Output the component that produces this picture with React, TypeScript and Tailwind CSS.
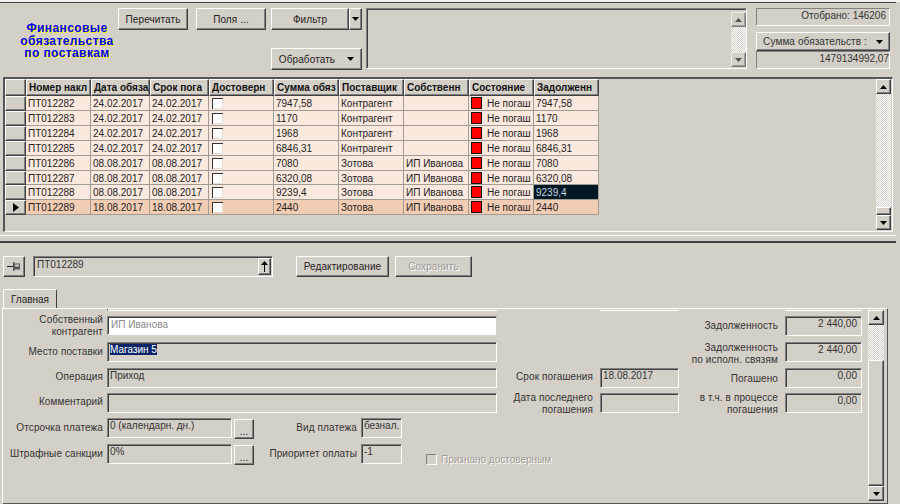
const raised = "border border-t-white border-l-white border-r-[#404040] border-b-[#404040] shadow-[inset_-1px_-1px_0_#808080]";
const sunken = "border border-t-[#808080] border-l-[#808080] border-r-white border-b-white shadow-[inset_1px_1px_0_#404040]";
const dither = "bg-[image:repeating-conic-gradient(#ffffff_0_25%,#d4d0c8_0_50%)] bg-size-[2px_2px]";

const rows = [
  { no: "ПТ012282", d1: "24.02.2017", d2: "24.02.2017", sum: "7947,58", sup: "Контрагент", own: "", debt: "7947,58" },
  { no: "ПТ012283", d1: "24.02.2017", d2: "24.02.2017", sum: "1170", sup: "Контрагент", own: "", debt: "1170" },
  { no: "ПТ012284", d1: "24.02.2017", d2: "24.02.2017", sum: "1968", sup: "Контрагент", own: "", debt: "1968" },
  { no: "ПТ012285", d1: "24.02.2017", d2: "24.02.2017", sum: "6846,31", sup: "Контрагент", own: "", debt: "6846,31" },
  { no: "ПТ012286", d1: "08.08.2017", d2: "08.08.2017", sum: "7080", sup: "Зотова", own: "ИП Иванова", debt: "7080" },
  { no: "ПТ012287", d1: "08.08.2017", d2: "08.08.2017", sum: "6320,08", sup: "Зотова", own: "ИП Иванова", debt: "6320,08" },
  { no: "ПТ012288", d1: "08.08.2017", d2: "08.08.2017", sum: "9239,4", sup: "Зотова", own: "ИП Иванова", debt: "9239,4" },
  { no: "ПТ012289", d1: "18.08.2017", d2: "18.08.2017", sum: "2440", sup: "Зотова", own: "ИП Иванова", debt: "2440" },
];

function Arrow({ dir }: { dir: "up" | "down" }) {
  return (
    <svg width="7" height="4" viewBox="0 0 7 4">
      <path d={dir === "up" ? "M3.5 0 7 4H0z" : "M0 0h7L3.5 4z"} fill="#000" />
    </svg>
  );
}

function ScrollBtn({ dir, disabled }: { dir: "up" | "down"; disabled?: boolean }) {
  return (
    <div className={`h-[15px] w-full shrink-0 flex items-center justify-center bg-[#d4d0c8] ${raised} ${disabled ? "opacity-60" : ""}`}>
      <Arrow dir={dir} />
    </div>
  );
}

function Btn({ className, children, disabled }: { className: string; children: React.ReactNode; disabled?: boolean }) {
  return (
    <div className={`flex items-center justify-center tracking-[0.1px] ${raised} ${disabled ? "text-[#9a9a94] [text-shadow:1px_1px_0_#ffffff]" : "text-[#222]"} ${className}`}>
      {children}
    </div>
  );
}

function HeadCell({ className, children }: { className: string; children?: React.ReactNode }) {
  return (
    <div className={`h-[17px] shrink-0 overflow-hidden whitespace-nowrap pl-[2px] font-bold leading-[15px] text-[#111] ${raised} ${className}`}>
      {children}
    </div>
  );
}

function Cell({ className, children }: { className: string; children?: React.ReactNode }) {
  return (
    <div className={`shrink-0 overflow-hidden whitespace-nowrap border-r border-b border-[#a09c94] pl-[2px] pt-[1px] leading-[13px] text-[#222] ${className}`}>
      {children}
    </div>
  );
}

function Field({ className, children }: { className: string; children?: React.ReactNode }) {
  return <div className={`h-[20px] overflow-hidden whitespace-nowrap pl-[2px] leading-[14px] text-[#333] ${sunken} ${className}`}>{children}</div>;
}

function Label({ className, h = "h-[18px]", children }: { className: string; h?: string; children: React.ReactNode }) {
  return <div className={`flex flex-col justify-center items-end text-right whitespace-nowrap leading-[12px] tracking-[0.1px] text-[#333] ${h} ${className}`}>{children}</div>;
}

export default function App() {
  return (
    <div className="w-[900px] h-[504px] overflow-hidden bg-[#d4d0c8] font-['Liberation_Sans',Arial,sans-serif] text-[10px]">
      <div className="h-[2px] bg-[#f4f2ee]" />
      <div className="h-[1px] w-[896px] bg-[#404040]" />

      {/* Top toolbar */}
      <div className="flex h-[74px] pt-[5px]">
        <div className="w-[118px] shrink-0 pt-[14px] pl-[16px] pr-[0px] text-center text-[12px] font-bold leading-[12.5px] tracking-[0.4px] text-[#0000ff] [text-shadow:1px_1px_0_#f5f500]">
          Финансовые<br />обязательства<br />по поставкам
        </div>
        <div className="w-[244px] shrink-0 flex flex-col justify-between pb-[7px]">
          <div className="flex">
            <Btn className="w-[70px] h-[22px]">Перечитать</Btn>
            <Btn className="w-[70px] h-[22px] ml-[8px]">Поля ...</Btn>
            <Btn className="w-[78px] h-[22px] ml-[5px]">Фильтр</Btn>
            <Btn className="w-[13px] h-[22px]"><Arrow dir="down" /></Btn>
          </div>
          <Btn className="w-[91px] h-[22px] ml-[153px] gap-[12px]">Обработать <Arrow dir="down" /></Btn>
        </div>
        <div className={`w-[381px] h-[61px] ml-[4px] shrink-0 flex justify-end ${sunken}`}>
          <div className="w-[15px] h-[55px] mt-[3px] flex flex-col">
            <ScrollBtn dir="up" disabled />
            <div className={`flex-1 ${dither}`} />
            <ScrollBtn dir="down" disabled />
          </div>
        </div>
        <div className="w-[134px] ml-[9px] shrink-0 flex flex-col">
          <div className="h-[18px] pr-[3px] text-right leading-[13px] text-[#333] border border-t-[#808080] border-l-[#808080] border-r-white border-b-white">Отобрано: 146206</div>
          <Btn className="h-[19px] mt-[6px] gap-[9px] text-[#333]">Сумма обязательств : <Arrow dir="down" /></Btn>
          <div className="h-[18px] text-right leading-[13px] text-[#333] border border-t-[#808080] border-l-[#808080] border-r-white border-b-white">1479134992,07</div>
        </div>
      </div>

      {/* Grid */}
      <div className="w-[890px] h-[155px] ml-[3px] flex border-l-2 border-t-2 border-[#555] border-b border-b-white border-r border-r-white">
        <div className="flex-1">
          <div className="flex h-[17px]">
            <HeadCell className="w-[21px]" />
            <HeadCell className="w-[65px]">Номер накл</HeadCell>
            <HeadCell className="w-[59px]">Дата обяза</HeadCell>
            <HeadCell className="w-[59px]">Срок пога</HeadCell>
            <HeadCell className="w-[65px]">Достоверн</HeadCell>
            <HeadCell className="w-[65px]">Сумма обяз</HeadCell>
            <HeadCell className="w-[65px]">Поставщик</HeadCell>
            <HeadCell className="w-[65px]">Собственн</HeadCell>
            <HeadCell className="w-[65px]">Состояние</HeadCell>
            <HeadCell className="w-[65px]">Задолженн</HeadCell>
          </div>
          {rows.map((r, i) => {
            const rowBg = i === 7 ? "bg-[#f3ccb4]" : "bg-[#fbe9df]";
            return (
              <div key={r.no} className={`flex ${i === 5 ? "h-[14px]" : "h-[15px]"}`}>
                <div className={`w-[21px] shrink-0 flex items-center justify-center ${raised}`}>
                  {i === 7 && (
                    <svg width="6" height="9" viewBox="0 0 6 9"><path d="M0 0l6 4.5L0 9z" fill="#000" /></svg>
                  )}
                </div>
                <Cell className={`w-[65px] ${rowBg}`}>{r.no}</Cell>
                <Cell className={`w-[59px] ${rowBg}`}>{r.d1}</Cell>
                <Cell className={`w-[59px] ${rowBg}`}>{r.d2}</Cell>
                <Cell className={`w-[65px] ${rowBg}`}>
                  <div className="mt-[1px] ml-[1px] w-[11px] h-[11px] bg-white border-t border-l border-[#333] shadow-[inset_-1px_-1px_0_#e4e0d8]" />
                </Cell>
                <Cell className={`w-[65px] ${rowBg}`}>{r.sum}</Cell>
                <Cell className={`w-[65px] ${rowBg}`}>{r.sup}</Cell>
                <Cell className={`w-[65px] ${rowBg}`}>{r.own}</Cell>
                <Cell className={`w-[65px] flex gap-[5px] ${rowBg}`}>
                  <span className="w-[11px] h-[12px] bg-[#ff0000] border border-[#111] shrink-0" />
                  Не погаш
                </Cell>
                <Cell className={`w-[65px] ${i === 6 ? "bg-[#001726] !text-[#c8d4dc]" : rowBg}`}>{r.debt}</Cell>
              </div>
            );
          })}
        </div>
        <div className="w-[15px] h-[151px] mr-[1px] flex flex-col">
          <ScrollBtn dir="up" />
          <div className={`h-[115px] ${dither}`} />
          <div className={`h-[8px] ${raised}`} />
          <ScrollBtn dir="down" />
        </div>
      </div>

      {/* Splitter */}
      <div className="h-[8px] w-[896px] border-b-2 border-b-[#404040]">
        <div className="mt-[3px] h-[1px] bg-white" />
      </div>

      {/* Record bar */}
      <div className="flex h-[21px] mt-[13px] ml-[3px]">
        <Btn className="w-[22px] h-[21px]">
          <svg width="14" height="9" viewBox="0 0 14 9">
            <path d="M0 4.5h6" stroke="#222" fill="none" />
            <path d="M6 0v9h1.5V7.5H13v-6H7.5V0z" fill="#555" />
            <path d="M8 2.5h4v2H8z" fill="#d4d0c8" />
          </svg>
        </Btn>
        <div className={`w-[240px] h-[21px] ml-[8px] flex justify-between pl-[3px] text-[#333] leading-[15px] ${sunken}`}>
          ПТ012289
          <div className={`w-[13px] h-[17px] mt-[1px] mr-[1px] flex items-center justify-center ${raised}`}>
            <svg width="7" height="11" viewBox="0 0 7 11"><path d="M3.5 0 7 4H4V11H3V4H0z" fill="#000" /></svg>
          </div>
        </div>
        <Btn className="w-[93px] h-[21px] ml-[23px]">Редактирование</Btn>
        <Btn className="w-[77px] h-[21px] ml-[6px]" disabled>Сохранить</Btn>
      </div>

      {/* Tab */}
      <div className="flex h-[19px] mt-[12px] ml-[3px]">
        <div className="w-[54px] pt-[2px] text-center text-[#222] border-t border-l border-white border-r border-r-[#404040] rounded-t-[2px]">Главная</div>
      </div>

      <div className="w-[886px] h-[197px] ml-[2px] flex border-t border-l border-white border-r border-r-[#555] border-b-2 border-b-[#555]">
        <div className="flex-1 min-w-0">
          <div className="flex h-[2px] ml-[104px]">
            <div className="w-[390px] border-l border-l-[#555] border-b border-b-white" />
            <div className="w-[79px] ml-[103px] border-b border-b-white" />
            <div className="w-[77px] ml-[106px] border-b border-b-white" />
          </div>
          <div className="mt-[5px] ml-[2px] grid grid-cols-[102px_125px_24px_105px_41px_95px_103px_79px_106px_77px] grid-rows-[26px_26px_25px_25px_26px_26px]">
            <Label h="h-[20px]" className="col-start-1 row-start-1 pr-[4px]"><span>Собственный</span><span>контрагент</span></Label>
            <div className="col-start-2 col-span-5 row-start-1 h-[19px] pl-[3px] leading-[15px] text-[#8a8a8a] bg-white overflow-hidden border border-t-[#808080] border-l-[#808080] border-r-[#d4d0c8] border-b-white shadow-[inset_1px_1px_0_#404040]">ИП Иванова</div>
            <Label className="col-start-1 row-start-2 pr-[4px] mt-[1px]">Место поставки</Label>
            <Field className="col-start-2 col-span-5 row-start-2"><span className="bg-[#0a246a] text-white">Магазин 5</span></Field>
            <Label className="col-start-1 row-start-3 pr-[4px]">Операция</Label>
            <Field className="col-start-2 col-span-5 row-start-3">Приход</Field>
            <Label className="col-start-1 row-start-4 pr-[4px]">Комментарий</Label>
            <Field className="col-start-2 col-span-5 row-start-4" />
            <Label className="col-start-1 row-start-5 pr-[4px] mt-[1px]">Отсрочка платежа</Label>
            <Field className="col-start-2 row-start-5">0 (календарн. дн.)</Field>
            <Btn className="col-start-3 row-start-5 w-[20px] h-[20px] ml-[2px] mt-[1px] pt-[4px]">...</Btn>
            <Label className="col-start-1 row-start-6 pr-[4px] mt-[1px]">Штрафные санкции</Label>
            <Field className="col-start-2 row-start-6">0%</Field>
            <Btn className="col-start-3 row-start-6 w-[20px] h-[20px] ml-[2px] mt-[1px] pt-[4px]">...</Btn>
            <Label className="col-start-4 row-start-5 pr-[4px] mt-[1px]">Вид платежа</Label>
            <Field className="col-start-5 row-start-5">безнал.</Field>
            <Label className="col-start-4 row-start-6 pr-[4px] mt-[1px]">Приоритет оплаты</Label>
            <Field className="col-start-5 row-start-6">-1</Field>
            <div className="col-start-6 col-span-3 row-start-6 ml-[24px] mt-[10px] flex items-center gap-[4px] h-[11px] text-[#a09c94] [text-shadow:1px_1px_0_#ffffff]">
              <span className="w-[11px] h-[11px] border border-t-[#808080] border-l-[#808080] border-r-white border-b-white" />
              Признано достоверным
            </div>
            <Label className="col-start-7 row-start-3 pr-[7px]">Срок погашения</Label>
            <Field className="col-start-8 row-start-3">18.08.2017</Field>
            <Label h="h-[22px]" className="col-start-7 row-start-4 pr-[7px]"><span>Дата последнего</span><span>погашения</span></Label>
            <Field className="col-start-8 row-start-4" />
            <Label className="col-start-9 row-start-1 pr-[7px] mt-[1px]">Задолженность</Label>
            <Field className="col-start-10 row-start-1 text-right pr-[4px]">2 440,00</Field>
            <Label h="h-[22px]" className="col-start-9 row-start-2 pr-[7px] mt-[1px]"><span>Задолженность</span><span>по исполн. связям</span></Label>
            <Field className="col-start-10 row-start-2 text-right pr-[4px]">2 440,00</Field>
            <Label className="col-start-9 row-start-3 pr-[7px] mt-[2px]">Погашено</Label>
            <Field className="col-start-10 row-start-3 text-right pr-[4px]">0,00</Field>
            <Label h="h-[22px]" className="col-start-9 row-start-4 pr-[7px]"><span>в т.ч. в процессе</span><span>погашения</span></Label>
            <Field className="col-start-10 row-start-4 text-right pr-[4px]">0,00</Field>
          </div>
        </div>
        <div className="w-[16px] h-[191px] mt-[1px] mr-[3px] flex flex-col">
          <ScrollBtn dir="up" />
          <div className={`h-[35px] ${dither}`} />
          <div className={`flex-1 ${raised}`} />
          <ScrollBtn dir="down" />
        </div>
      </div>
    </div>
  );
}
